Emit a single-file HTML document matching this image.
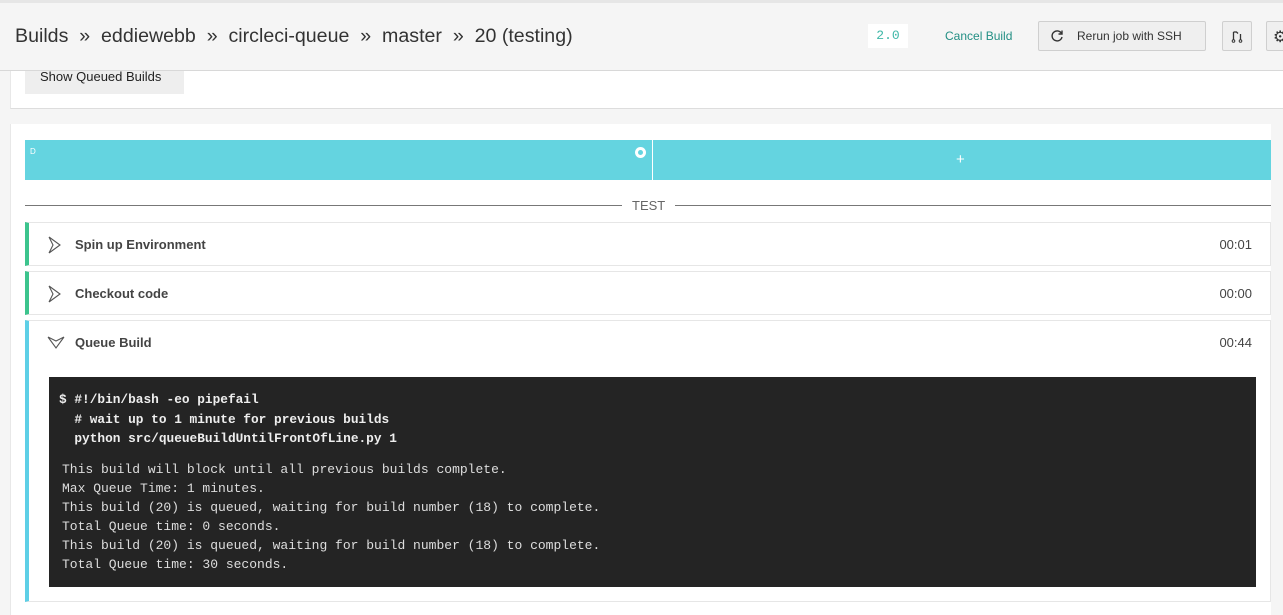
<!DOCTYPE html>
<html><head><meta charset="utf-8"><style>
*{box-sizing:border-box;margin:0;padding:0}
body{width:1283px;height:615px;overflow:hidden;background:#f5f5f5;font-family:"Liberation Sans",sans-serif;position:relative}
.abs{position:absolute}
.hdr{left:0;top:0;width:1283px;height:71px;background:#f5f5f5;border-top:3px solid #e6e6e6;border-bottom:1px solid #d8d8d8}
.crumb{left:15px;top:25px;font-size:19.6px;color:#333;white-space:nowrap}
.ver{left:868px;top:24px;width:40px;height:24px;background:#fff;color:#3fb8a8;font-family:"Liberation Mono",monospace;font-size:13px;line-height:24px;text-align:center}
.cancel{left:945px;top:29px;font-size:12px;color:#238f84}
.btn{background:#efefef;border:1px solid #cfcfcf;border-radius:2px}
.row{left:25px;width:1246px;background:#fff;border:1px solid #e6e6e6;border-left:4px solid #3cc48d}
.row .t{position:absolute;left:46px;font-size:13px;font-weight:bold;color:#444}
.row .tm{position:absolute;right:18px;font-size:13px;color:#444}
.row svg{position:absolute;left:18px}
.term{left:49px;top:377px;width:1207px;height:210px;background:#242424;color:#ddd;font-family:"Liberation Mono",monospace}
</style></head><body>
<div class="abs hdr"></div>
<div class="abs crumb">Builds &nbsp;»&nbsp; eddiewebb &nbsp;»&nbsp; circleci-queue &nbsp;»&nbsp; master &nbsp;»&nbsp; 20 (testing)</div>
<div class="abs ver">2.0</div>
<div class="abs cancel">Cancel Build</div>
<div class="abs btn" style="left:1038px;top:21px;width:168px;height:30px"></div>
<svg class="abs" style="left:1050px;top:29px" width="14" height="14" viewBox="0 0 14 14"><path d="M11.5 4.5A5 5 0 1 0 12 8" fill="none" stroke="#333" stroke-width="1.4"/><path d="M12 1.5v3.5h-3.5" fill="none" stroke="#333" stroke-width="1.4"/></svg>
<div class="abs" style="left:1077px;top:29px;font-size:12px;color:#333">Rerun job with SSH</div>
<div class="abs btn" style="left:1222px;top:21px;width:30px;height:30px"></div>
<svg class="abs" style="left:1230px;top:29px" width="14" height="14" viewBox="0 0 14 14"><path d="M3.5 3v9M10.5 5v7M3.5 3h3l1.5 1.5" fill="none" stroke="#333" stroke-width="1.3"/><circle cx="3.5" cy="12" r="1.3" fill="#fff" stroke="#333"/><circle cx="10.5" cy="12" r="1.3" fill="#fff" stroke="#333"/></svg>
<div class="abs btn" style="left:1266px;top:21px;width:30px;height:30px"></div>
<div class="abs" style="left:1273px;top:27px;font-size:16px;color:#333">⚙</div>

<div class="abs" style="left:10px;top:71px;width:1273px;height:38px;background:#fff;border-bottom:1px solid #ddd;border-left:1px solid #e8e8e8"></div>
<div class="abs" style="left:25px;top:71px;width:159px;height:23px;background:#eee;font-size:13px;color:#222;padding:0 0 0 15px;line-height:10px"><div style="line-height:11px">Show Queued Builds</div></div>

<div class="abs" style="left:10px;top:124px;width:1261px;height:491px;background:#fff;border-left:1px solid #e8e8e8"></div>
<div class="abs" style="left:25px;top:140px;width:1246px;height:40px;background:#64d4e0"></div>
<div class="abs" style="left:652px;top:140px;width:1px;height:40px;background:#fff"></div>
<div class="abs" style="left:30px;top:147px;font-size:8px;color:#fff">D</div>
<div class="abs" style="left:635px;top:147px;width:11px;height:11px;border-radius:50%;background:#fff"></div>
<div class="abs" style="left:638px;top:150px;width:5px;height:5px;border-radius:50%;background:#64d4e0"></div>
<div class="abs" style="left:956px;top:151px;font-size:15px;color:#fff">+</div>

<div class="abs" style="left:25px;top:205px;width:597px;height:1px;background:#777"></div>
<div class="abs" style="left:675px;top:205px;width:596px;height:1px;background:#777"></div>
<div class="abs" style="left:632px;top:198px;font-size:13px;color:#666">TEST</div>

<div class="abs row" style="top:222px;height:44px"><svg style="top:13px" width="16" height="18" viewBox="0 0 16 18"><path d="M2 1l11 8-11 8M2 1l4 8-4 8" fill="none" stroke="#555" stroke-width="1.1"/></svg><span class="t" style="top:14px">Spin up Environment</span><span class="tm" style="top:14px">00:01</span></div>
<div class="abs row" style="top:271px;height:44px"><svg style="top:13px" width="16" height="18" viewBox="0 0 16 18"><path d="M2 1l11 8-11 8M2 1l4 8-4 8" fill="none" stroke="#555" stroke-width="1.1"/></svg><span class="t" style="top:14px">Checkout code</span><span class="tm" style="top:14px">00:00</span></div>
<div class="abs row" style="top:320px;height:282px;border-left-color:#5dcfe6"><svg style="top:14px" width="18" height="16" viewBox="0 0 18 16"><path d="M1 2l8 11 8-11M1 2l8 4 8-4" fill="none" stroke="#555" stroke-width="1.1"/></svg><span class="t" style="top:14px">Queue Build</span><span class="tm" style="top:14px">00:44</span></div>

<div class="abs term">
<div style="position:absolute;left:10px;top:13px;font-size:12.8px;font-weight:bold;line-height:19.5px;color:#eee;white-space:pre">$ #!/bin/bash -eo pipefail
  # wait up to 1 minute for previous builds
  python src/queueBuildUntilFrontOfLine.py 1</div>
<div style="position:absolute;left:13px;top:83px;font-size:13px;line-height:19.1px;color:#ddd;white-space:pre">This build will block until all previous builds complete.
Max Queue Time: 1 minutes.
This build (20) is queued, waiting for build number (18) to complete.
Total Queue time: 0 seconds.
This build (20) is queued, waiting for build number (18) to complete.
Total Queue time: 30 seconds.</div>
</div>
</body></html>
